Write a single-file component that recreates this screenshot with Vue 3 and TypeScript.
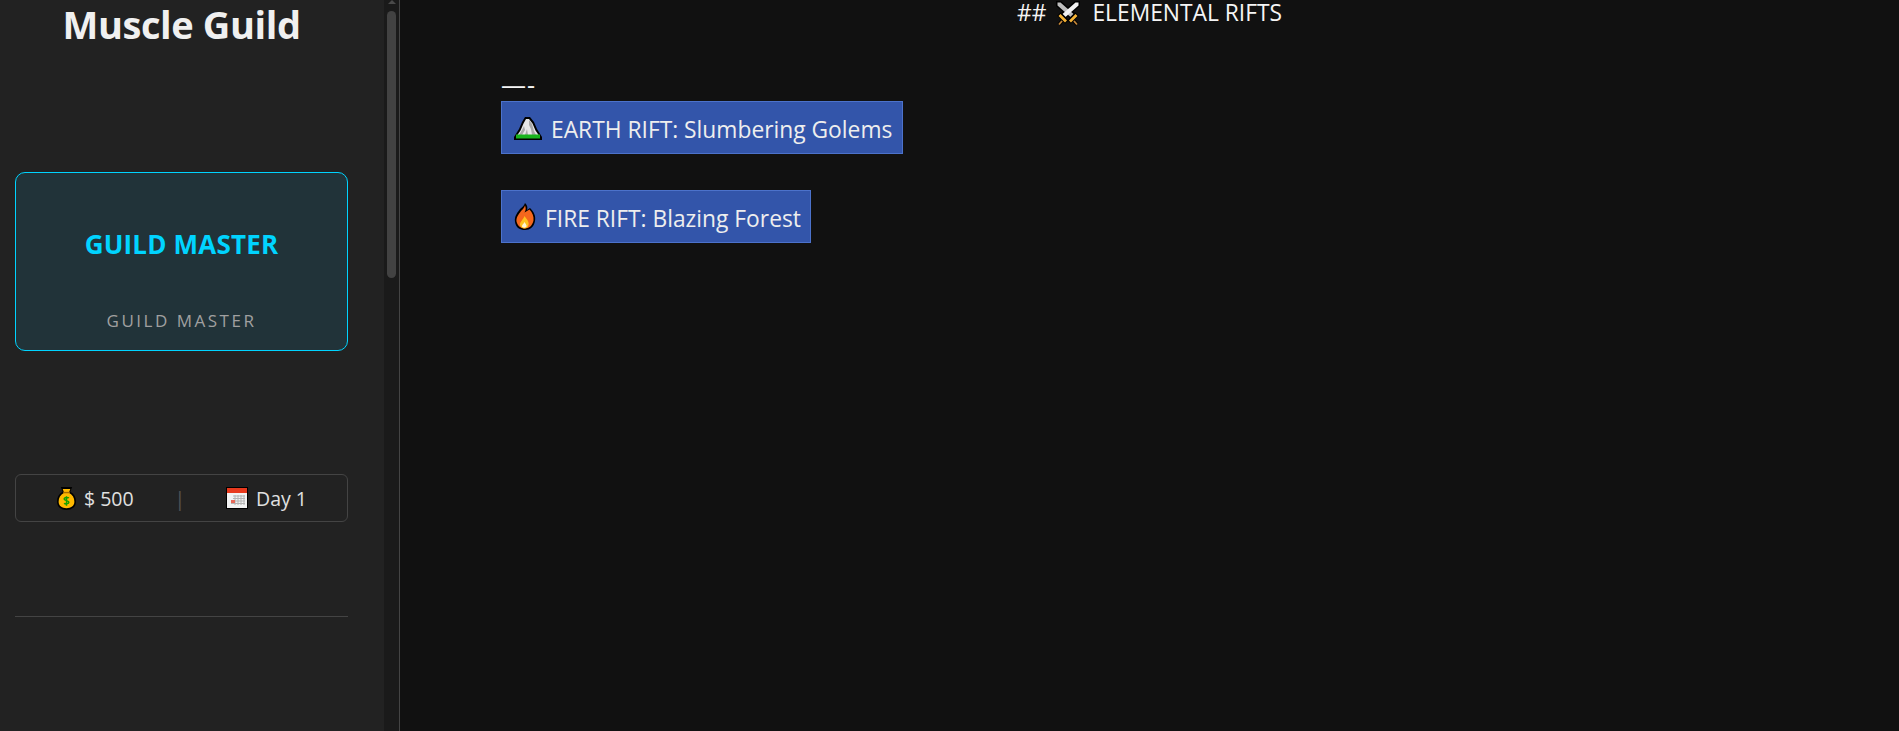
<script setup lang="ts">
const rifts = [
  { id: 'earth', label: 'EARTH RIFT: Slumbering Golems' },
  { id: 'fire', label: 'FIRE RIFT: Blazing Forest' },
]
</script>

<template>
  <div class="page">
    <aside class="sidebar">
      <div class="side-content">
        <h1 class="title">Muscle Guild</h1>

        <div class="rank-card">
          <div class="rank-name">GUILD MASTER</div>
          <div class="rank-sub">GUILD MASTER</div>
        </div>

        <div class="stats">
          <span class="stat">
            <svg class="icon-bag" viewBox="0 0 20 24" width="19" height="23">
              <path d="M4 0h12l-2 5c4 2 6 6 6 10 0 6-4 9-10 9S0 21 0 15c0-4 2-8 6-10z" fill="#000" />
              <path d="M6 2h8l-1.500 4c4 2 5.800 5.500 5.800 9.500 0 4.500-3.800 6.800-8.300 6.800s-8.300-2.300-8.300-6.800c0-4 1.800-7.500 5.800-9.500z" fill="#ffb900" />
              <rect x="6.500" y="5" width="7" height="1.500" fill="#a86d00" />
              <path d="M12.500 11.500c-1-1-5-1-5 1s5 1.500 5 3.500-4 2-5 1M10 9.500v10" fill="none" stroke="#16a000" stroke-width="1.600" />
            </svg>
            <span>$ 500</span>
          </span>
          <span class="sep">|</span>
          <span class="stat">
            <svg class="icon-cal" viewBox="0 0 22 22" width="22" height="22">
              <rect width="22" height="22" fill="#000" />
              <rect x="1" y="1" width="20" height="20" fill="#f2f2f2" />
              <rect x="1" y="1" width="20" height="5" fill="#e8391d" />
              <path d="M7 9h12M7 11.500h12M5 14h14M5 16.500h14M9 8v10M12 8v10M15 8v10M18 8v10" stroke="#b4b4b4" stroke-width="1" />
              <rect x="5" y="13" width="4" height="3" fill="#e86a5a" />
            </svg>
            <span>Day 1</span>
          </span>
        </div>

        <hr class="rule" />
      </div>

      <div class="scrollbar">
        <span class="arrow"></span>
        <span class="thumb"></span>
      </div>
    </aside>

    <main class="main">
      <div class="heading">
        <span>##</span>
        <svg class="icon-swords" viewBox="0 0 26 26" width="26" height="26">
          <path d="M1 1h5l15 13-5 5L1 6z" fill="#000" />
          <path d="M25 1h-5L5 14l5 5L25 6z" fill="#000" />
          <path d="M2.500 2.500h3l13 11.500-3 3L2.500 5.500z" fill="#bdbdbd" />
          <path d="M23.500 2.500h-3L7.500 14l3 3L23.500 5.500z" fill="#f2f2f2" />
          <path d="M4 14l8 8M22 14l-8 8" stroke="#000" stroke-width="5" />
          <path d="M4.500 15l6.500 6.500M21.500 15L15 21.500" stroke="#f5b335" stroke-width="2.800" />
          <path d="M7 21l-3 3.500M19 21l3 3.500" stroke="#000" stroke-width="3.600" />
          <path d="M7 21l-3 3.500M19 21l3 3.500" stroke="#c4863a" stroke-width="1.800" />
        </svg>
        <span class="heading-text">ELEMENTAL RIFTS</span>
      </div>

      <div class="rift-list">
        <p class="dash">—-</p>
        <button v-for="rift in rifts" :key="rift.id" class="rift-btn" :class="rift.id" type="button">
          <svg v-if="rift.id === 'earth'" class="icon-mountain" viewBox="0 0 28 24" width="28" height="24">
            <path d="M11 1h5l4 5 3 7 5 8v3H0v-3l5-8 3-7z" fill="#000" />
            <path d="M12 3h3l3.500 4.500 3 7 4.500 6.500v1H2v-1l4.500-6.500 3-7z" fill="#e6e6e6" />
            <path d="M15 4l3 4 2 7 2 4h-4l-1-6-2-4zM10 10l1 4-3 5H5l3-5zM13 13l1 6h-3z" fill="#a8a8a8" />
            <rect x="2" y="18.500" width="24" height="4" fill="#18b41c" />
          </svg>
          <svg v-else class="icon-fire" viewBox="0 0 22 28" width="22" height="28">
            <path d="M11 0c2 2 3 4 2 7l3-2c4 4 6 8 5 13-1 6-5 9-10 9S2 25 1 19C0 13 4 9 6 6c2-2 4-3 5-6z" fill="#000" />
            <path d="M11 2.500c1 2 1 5-.5 7l5-3c3 3 4.500 7 4 11-1 5-4.500 8-8.500 8S3.500 23 2.500 18.500C2 14 5 11 7 8c2-2 3-3 4-5.500z" fill="#f4671d" />
            <path d="M10.500 13c1 2 5 5 4 9-.5 2-2 3.500-4 3.500s-3.800-1-4.500-3.500c-.5-3 3-5 4.500-9z" fill="#ffc21f" />
            <path d="M10.500 19c1 2 2.500 3 2 4.500-.5 1.500-4 1.500-4.500 0-.5-1.500 2-3 2.500-4.500z" fill="#fff6d8" />
          </svg>
          <span class="rift-label">{{ rift.label }}</span>
        </button>
      </div>
    </main>
  </div>
</template>

<style>
html,
body {
  margin: 0;
  background: #111111;
  overflow: hidden;
}
</style>

<style scoped>
.page {
  display: flex;
  width: 1899px;
  height: 731px;
  overflow: hidden;
  background: #111111;
  color: #f0f0f0;
  font-family: 'Open Sans', 'Noto Sans', sans-serif;
}

.sidebar {
  display: flex;
  flex: 0 0 400px;
  box-sizing: border-box;
  border-right: 1px solid #444444;
  background: #111111;
}

.side-content {
  box-sizing: border-box;
  width: 384px;
  padding: 0 36px 0 15px;
  background: #222222;
}

.title {
  box-sizing: border-box;
  height: 172px;
  margin: 0;
  color: #f0f0f0;
  font-size: 38px;
  line-height: 48px;
  font-weight: 700;
  letter-spacing: -0.4px;
  text-align: center;
}

.rank-card {
  box-sizing: border-box;
  display: flex;
  flex-direction: column;
  align-items: center;
  height: 179px;
  padding-top: 55px;
  border: 1px solid #00d4ff;
  border-radius: 10px;
  background: #213339;
}

.rank-name {
  color: #00d4ff;
  font-size: 26px;
  line-height: 32px;
  font-weight: 700;
  letter-spacing: 0.2px;
}

.rank-sub {
  margin-top: 50px;
  color: #a0a0a0;
  font-size: 17px;
  line-height: 22px;
  letter-spacing: 2.5px;
}

.stats {
  box-sizing: border-box;
  display: flex;
  align-items: center;
  justify-content: space-between;
  height: 48px;
  margin-top: 123px;
  padding: 0 40px 0 41px;
  border: 1px solid #444444;
  border-radius: 6px;
  color: #e0e0e0;
  font-size: 19.500px;
}

.stat {
  display: flex;
  align-items: center;
  gap: 8px;
}

.sep {
  color: #555555;
}

.rule {
  height: 1px;
  margin: 94px 0 0;
  border: 0;
  background: #444444;
}

.scrollbar {
  display: flex;
  flex-direction: column;
  align-items: center;
  width: 15px;
  background: #1a1a1a;
}

.arrow {
  width: 0;
  height: 0;
  margin-bottom: 7px;
  border: 4px solid transparent;
  border-top: 0;
  border-bottom-color: #4a4a4a;
}

.thumb {
  width: 9px;
  height: 267px;
  border-radius: 5px;
  background: #424242;
}

.main {
  flex: 1;
  min-width: 0;
  background: #111111;
}

.heading {
  display: flex;
  align-items: center;
  justify-content: center;
  gap: 9px;
  height: 26px;
  color: #f5f5f5;
  font-size: 22.800px;
  line-height: 26px;
}

.heading-text {
  margin-left: 2px;
}

.rift-list {
  display: flex;
  flex-direction: column;
  align-items: flex-start;
  padding-left: 101px;
}

.dash {
  height: 33px;
  margin: 42px 0 0;
  color: #f5f5f5;
  font-size: 25px;
  line-height: 33px;
  letter-spacing: 1px;
}

.rift-btn {
  display: flex;
  align-items: center;
  gap: 9px;
  box-sizing: border-box;
  height: 53px;
  margin-bottom: 36px;
  padding: 0 10px 0 12px;
  border: 1px solid #4c72cb;
  border-radius: 0;
  background: #3355aa;
  color: #eeeeee;
  font-family: inherit;
  font-size: 22.800px;
}

.rift-btn.fire {
  padding-right: 9px;
}

.rift-label {
  padding-top: 4px;
}
</style>
